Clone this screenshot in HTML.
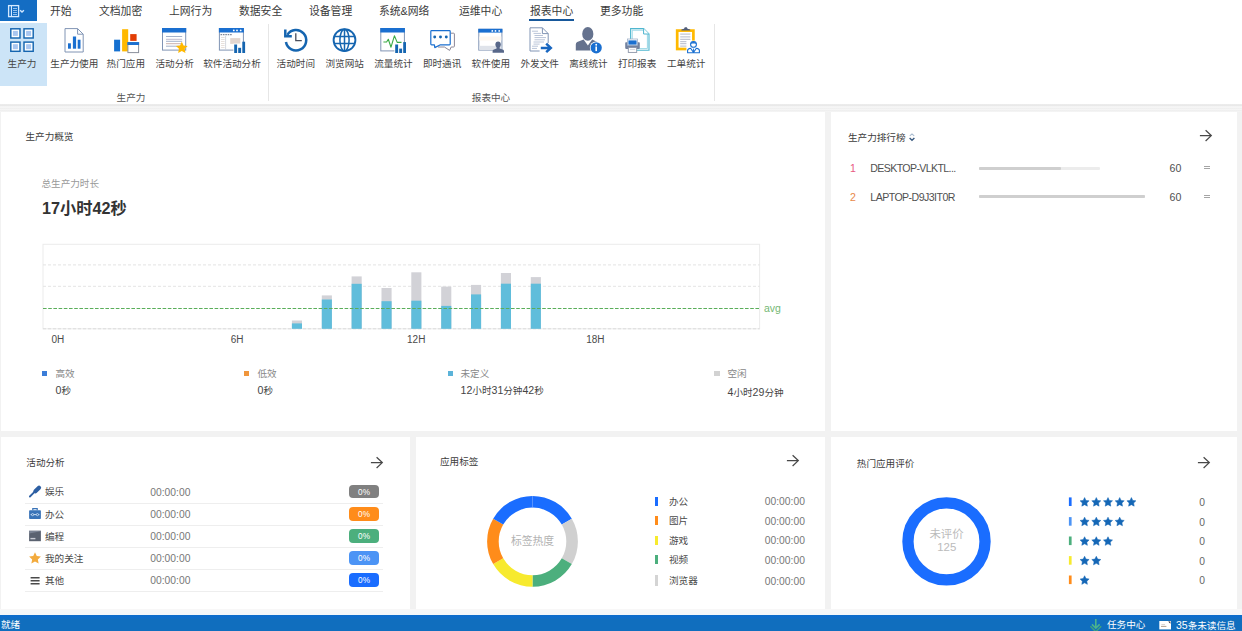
<!DOCTYPE html>
<html lang="zh-CN">
<head>
<meta charset="utf-8">
<title>报表中心 - 生产力</title>
<style>
html,body{margin:0;padding:0;}
body{width:1242px;height:631px;overflow:hidden;background:#f2f2f2;position:relative;
  font-family:"Liberation Sans","Noto Sans CJK SC",sans-serif;font-size:10px;color:#444;}
.abs{position:absolute;}
.t{position:absolute;white-space:nowrap;line-height:14px;height:14px;}
.c{transform:translateX(-50%);}
.panel{position:absolute;background:#fff;}
svg{position:absolute;overflow:visible;}
#menubar{position:absolute;left:0;top:0;width:1242px;height:22px;background:#fff;}
#appbtn{position:absolute;left:0;top:0;width:37px;height:20.7px;background:#146dc3;}
.mi{position:absolute;top:4px;line-height:14px;font-size:10.8px;color:#3a3a3a;white-space:nowrap;}
#ribbon{position:absolute;left:0;top:22px;width:1242px;height:82px;background:#fff;}
.rl{position:absolute;top:57.1px;line-height:14px;font-size:9.6px;color:#444;white-space:nowrap;transform:translateX(-50%);}
.gl{position:absolute;top:91px;line-height:14px;font-size:9.6px;color:#555;white-space:nowrap;transform:translateX(-50%);}
.sep{position:absolute;top:24px;width:1px;height:77px;background:#e6e6e6;}
#status{position:absolute;left:0;top:615.4px;width:1242px;height:16px;background:linear-gradient(to bottom,#0b6ccb 0,#0c6dca 2.5px,#106ebe 4.5px);color:#fff;}
#status .t{font-size:9.6px;top:2.8px;color:#fff;}
</style>
</head>
<body>

<div id="menubar">
  <div id="appbtn">
    <svg width="37" height="21" viewBox="0 0 37 21" style="left:0;top:0">
      <rect x="8.6" y="5.6" width="10" height="11" fill="none" stroke="#d4e9ff" stroke-width="1.3"/>
      <rect x="10.9" y="6" width="1.1" height="10.4" fill="#d4e9ff"/>
      <path d="M13 8.5h4M13 10.5h4M13 12.5h4M13 14.5h4" stroke="#9fc8f2" stroke-width="0.9"/>
      <path d="M20.1 10.2l1.9 1.9 1.9-1.9" fill="none" stroke="#cfe6ff" stroke-width="1.4"/>
    </svg>
  </div>
  <div class="mi" style="left:50px">开始</div>
  <div class="mi" style="left:99px">文档加密</div>
  <div class="mi" style="left:169px">上网行为</div>
  <div class="mi" style="left:239px">数据安全</div>
  <div class="mi" style="left:309px">设备管理</div>
  <div class="mi" style="left:379px">系统&amp;网络</div>
  <div class="mi" style="left:459px">运维中心</div>
  <div class="mi" style="left:530px">报表中心</div>
  <div class="mi" style="left:600px">更多功能</div>
  <div class="abs" style="left:529px;top:18.8px;width:44.6px;height:2.7px;background:#17589b"></div>
</div>
<div id="ribbon"></div>
<div class="abs" style="left:0;top:23px;width:47px;height:63px;background:#cce4f7"></div>
<div class="sep" style="left:268px"></div><div class="sep" style="left:714px"></div>
<div class="rl" style="left:22px">生产力</div>
<div class="rl" style="left:74.3px">生产力使用</div>
<div class="rl" style="left:125.8px">热门应用</div>
<div class="rl" style="left:174.7px">活动分析</div>
<div class="rl" style="left:232px">软件活动分析</div>
<div class="rl" style="left:295.8px">活动时间</div>
<div class="rl" style="left:344.7px">浏览网站</div>
<div class="rl" style="left:393.4px">流量统计</div>
<div class="rl" style="left:442.1px">即时通讯</div>
<div class="rl" style="left:490.8px">软件使用</div>
<div class="rl" style="left:539.7px">外发文件</div>
<div class="rl" style="left:588.4px">离线统计</div>
<div class="rl" style="left:637.1px">打印报表</div>
<div class="rl" style="left:686.2px">工单统计</div>
<div class="gl" style="left:131px">生产力</div><div class="gl" style="left:491px">报表中心</div>
<svg width="1242" height="110" viewBox="0 0 1242 110" style="left:0;top:0">
<rect x="10.8" y="28.8" width="9.2" height="9.2" fill="#fff" stroke="#1565b0" stroke-width="1.45"/>
<rect x="12.9" y="30.9" width="5" height="5" fill="#a9c6f0"/>
<rect x="24.0" y="28.8" width="9.2" height="9.2" fill="#fff" stroke="#1565b0" stroke-width="1.45"/>
<rect x="26.099999999999998" y="30.9" width="5" height="5" fill="#a9c6f0"/>
<rect x="10.8" y="42.099999999999994" width="9.2" height="9.2" fill="#fff" stroke="#1565b0" stroke-width="1.45"/>
<rect x="12.9" y="44.199999999999996" width="5" height="5" fill="#a9c6f0"/>
<rect x="24.0" y="42.099999999999994" width="9.2" height="9.2" fill="#fff" stroke="#1565b0" stroke-width="1.45"/>
<rect x="26.099999999999998" y="44.199999999999996" width="5" height="5" fill="#a9c6f0"/>
<path d="M65 28.6H77.6L83.2 34.2V52H65Z" fill="#fff" stroke="#8094b4" stroke-width="1"/>
<path d="M77.6 28.6V34.2H83.2" fill="none" stroke="#8094b4" stroke-width="1"/>
<rect x="68" y="43.3" width="2.9" height="5.4" fill="#1a6fd0"/><rect x="72.9" y="36.5" width="3.2" height="12.2" fill="#1a6fd0"/><rect x="77.7" y="39.7" width="2.8" height="9" fill="#1a6fd0"/>
<rect x="114.1" y="39.7" width="6" height="11.7" fill="#1570d0"/>
<rect x="122.1" y="29.2" width="6.1" height="22.2" fill="#ffb900"/>
<rect x="130.2" y="34.1" width="6.4" height="6.8" fill="#e23d05"/>
<rect x="127.9" y="42.6" width="10.7" height="10" fill="#fff" stroke="#8a8f9c" stroke-width="1"/>
<rect x="127.4" y="42.1" width="11.7" height="2.9" fill="#1a6fd0"/>
<rect x="162.5" y="28.5" width="23.2" height="21.6" fill="#fff" stroke="#8094b4" stroke-width="1"/><rect x="162" y="28" width="24.2" height="4.5" fill="#1a6fd0"/>
<path d="M166 36.5H182.2" stroke="#9aa9c4" stroke-width="0.9"/>
<path d="M166 39.3H182.2" stroke="#b9b4c9" stroke-width="0.9"/>
<path d="M166 41.3H182.2" stroke="#9aa9c4" stroke-width="0.9"/>
<path d="M166 43.7H182.2" stroke="#c4a9a4" stroke-width="0.9"/>
<path d="M166 46.2H182.2" stroke="#9aa9c4" stroke-width="0.9"/>
<polygon points="181.80,41.70 183.56,45.47 187.70,45.98 184.65,48.83 185.44,52.92 181.80,50.90 178.16,52.92 178.95,48.83 175.90,45.98 180.04,45.47" fill="#ffb900"/>
<rect x="219.4" y="28.5" width="24.0" height="21.6" fill="#fff" stroke="#8094b4" stroke-width="1"/><rect x="218.9" y="28" width="25.0" height="4.5" fill="#1a6fd0"/><circle cx="233.8" cy="30.4" r="0.9" fill="#fff"/><circle cx="237.0" cy="30.4" r="0.9" fill="#fff"/><circle cx="240.7" cy="30.4" r="0.9" fill="#fff"/>
<path d="M220.5 34.6H232.5" stroke="#7f8796" stroke-width="1.1" stroke-dasharray="1.6 0.8"/>
<path d="M225.6 36V50" stroke="#c9ced8" stroke-width="0.8"/>
<path d="M221 37.5H224.6M221 39.5H224.6M221 41.5H224.6M221 43.5H224.6M221 45.5H224.6M221 47.5H224.6" stroke="#e2d9d3" stroke-width="0.8"/>
<rect x="230.2" y="38.1" width="10.1" height="5.8" fill="#e3d6cf"/>
<rect x="233.4" y="43.6" width="12.4" height="9.6" fill="#fff"/>
<rect x="234.2" y="44.5" width="2.9" height="8.5" fill="#1565b0"/><rect x="238.2" y="47.8" width="2.9" height="5.2" fill="#1565b0"/><rect x="242.3" y="41.7" width="2.8" height="11.3" fill="#1565b0"/>
<path d="M287.35 34.79A10.2 10.2 0 1 1 285.95 41.97" fill="none" stroke="#1565b0" stroke-width="2.5"/>
<path d="M285.3 29.6V36.2H291.8" fill="none" stroke="#1565b0" stroke-width="2.5" stroke-linejoin="miter"/>
<path d="M295.8 33.3V40.6H301.8" fill="none" stroke="#4a4f5c" stroke-width="1.3"/>
<circle cx="344.5" cy="40.1" r="10.9" fill="none" stroke="#1565b0" stroke-width="1.9"/>
<ellipse cx="344.5" cy="40.1" rx="4.6" ry="10.9" fill="none" stroke="#1565b0" stroke-width="1.5"/>
<path d="M344.5 29.200000000000003V51.0M334.2 36.6H354.8M334.2 43.6H354.8" fill="none" stroke="#1565b0" stroke-width="1.5"/>
<rect x="380.8" y="28.5" width="23.6" height="22.4" fill="#fff" stroke="#8094b4" stroke-width="1"/><rect x="380.3" y="28" width="24.6" height="4.5" fill="#1a6fd0"/>
<path d="M383.4 42H386.6L388.3 39.3L391 47.2L394.4 35.8L397.2 42.4H401.5" fill="none" stroke="#3aaa45" stroke-width="1.1" stroke-linejoin="round"/>
<rect x="394.4" y="43.7" width="12.4" height="9.6" fill="#fff"/>
<rect x="395.2" y="44.5" width="2.9" height="8.5" fill="#1565b0"/><rect x="399.2" y="48.6" width="2.9" height="4.4" fill="#1565b0"/><rect x="403.2" y="42.1" width="2.8" height="10.9" fill="#1565b0"/>
<path d="M451 33.2H453.6Q454.4 33.2 454.4 34V46.2Q454.4 47 453.6 47H451.2L449.6 50.4L444.4 47H438" fill="none" stroke="#8c8796" stroke-width="1"/>
<path d="M431.6 30.6H449.4Q450.2 30.6 450.2 31.4V44Q450.2 44.8 449.4 44.8H440.4L434.8 47.6L434.4 44.8H431.6Q430.8 44.8 430.8 44V31.4Q430.8 30.6 431.6 30.6Z" fill="#fff" stroke="#1a6fd0" stroke-width="1.2" stroke-linejoin="round"/>
<circle cx="434.7" cy="37" r="1.45" fill="#1565b0"/>
<circle cx="440.5" cy="37" r="1.45" fill="#1565b0"/>
<circle cx="446.3" cy="37" r="1.45" fill="#1565b0"/>
<rect x="478.8" y="29.3" width="23.1" height="20.8" fill="#fff" stroke="#8094b4" stroke-width="1"/><rect x="478.3" y="28.8" width="24.1" height="3.8" fill="#1a6fd0"/><circle cx="492.3" cy="30.9" r="0.9" fill="#fff"/><circle cx="495.5" cy="30.9" r="0.9" fill="#fff"/><circle cx="499.2" cy="30.9" r="0.9" fill="#fff"/>
<rect x="479.3" y="45.8" width="22" height="4.3" fill="#dfe3ea"/>
<rect x="479.3" y="36.5" width="22" height="4" fill="#fdf7f0"/>
<ellipse cx="498.1" cy="44.6" rx="2.7" ry="3.1" fill="#58688a"/>
<path d="M496.6 46.5H499.6V48.6L503.2 49.8Q504 50.2 504 51.2V52.8H492.6V51.2Q492.6 50.2 493.4 49.8L496.6 48.6Z" fill="#58688a"/>
<path d="M530 27.8H542.4L548.2 33.6V51H530Z" fill="#fff" stroke="#8094b4" stroke-width="1"/>
<path d="M542.4 27.8V33.6H548.2" fill="none" stroke="#8094b4" stroke-width="1"/>
<path d="M532 31.2H538" stroke="#b9c4d8" stroke-width="1"/>
<path d="M533.5 33.4H541" stroke="#b9c4d8" stroke-width="1"/>
<path d="M534.5 35.5H543" stroke="#b9c4d8" stroke-width="1"/>
<path d="M534.5 37.6H546" stroke="#b9c4d8" stroke-width="1"/>
<path d="M534.5 39.8H545" stroke="#b9c4d8" stroke-width="1"/>
<path d="M533.5 42.0H544" stroke="#b9c4d8" stroke-width="1"/>
<path d="M533.5 44.1H542" stroke="#b9c4d8" stroke-width="1"/>
<path d="M532 46.2H538" stroke="#b9c4d8" stroke-width="1"/>
<path d="M532 48.4H537" stroke="#b9c4d8" stroke-width="1"/>
<rect x="539.6" y="43" width="10" height="10" fill="#fff"/>
<path d="M540.8 47.9H550M546.2 43.6L550.8 47.9L546.2 52.2" fill="none" stroke="#1866c0" stroke-width="2.5"/>
<ellipse cx="587.8" cy="33.9" rx="5.6" ry="6.9" fill="#65728e"/>
<path d="M583.6 39.6L587.9 45.6L592.2 39.6L597.2 42Q598.6 42.8 598.6 44.6V50.6H575.8V44.6Q575.8 42.8 577.2 42Z" fill="#65728e"/>
<circle cx="596.2" cy="47.8" r="6.4" fill="#fff"/><circle cx="596.2" cy="47.8" r="5.6" fill="#1a6fd0"/>
<circle cx="596.2" cy="44.7" r="0.95" fill="#fff"/><rect x="595.4" y="46.5" width="1.6" height="4.6" fill="#fff"/>
<path d="M630.6 28.6H643.6L649 34V50.2H630.6Z" fill="#fff" stroke="#4fb6cf" stroke-width="1.1"/>
<path d="M632.2 30.2H642.9L647.4 34.7V48.6H632.2Z" fill="#fff" stroke="#8fd3e3" stroke-width="0.9"/>
<path d="M643.6 28.6V34H649" fill="#fff" stroke="#4fb6cf" stroke-width="1"/>
<rect x="625.2" y="42.3" width="14.6" height="6.6" rx="0.8" fill="#73829f"/>
<rect x="627.6" y="39" width="9.8" height="6.2" fill="#fff" stroke="#9fb0c8" stroke-width="0.8"/>
<rect x="628.4" y="40.4" width="8.2" height="4.2" fill="#1a6fd0"/>
<rect x="628.3" y="47.6" width="8.4" height="4.8" fill="#fff" stroke="#8a93a6" stroke-width="0.9"/>
<path d="M629.8 49.6H635.2" stroke="#c9ccd4" stroke-width="0.8"/>
<rect x="677.2" y="30.6" width="16.2" height="18.4" fill="#fff" stroke="#ffb900" stroke-width="2.7"/>
<path d="M680.2 34.1H690.4" stroke="#b4b9c8" stroke-width="1"/>
<path d="M680.2 36.9H690.4" stroke="#b4b9c8" stroke-width="1"/>
<path d="M680.2 39.3H690.4" stroke="#b4b9c8" stroke-width="1"/>
<path d="M680.2 41.7H690.4" stroke="#b4b9c8" stroke-width="1"/>
<path d="M680.2 43.7H690.4" stroke="#b4b9c8" stroke-width="1"/>
<path d="M680.2 46.1H690.4" stroke="#b4b9c8" stroke-width="1"/>
<path d="M681.4 30.4H690.2V29.6L687.6 28.8L686.8 27.2H684.8L684 28.8L681.4 29.6Z" fill="#505c78"/>
<rect x="686.4" y="40.6" width="13.6" height="13" fill="#fff"/>
<circle cx="693.5" cy="44.4" r="2.9" fill="#fff" stroke="#1a6fd0" stroke-width="1.1"/>
<path d="M690.6 43.6Q693.5 40.4 696.4 43.6" fill="#1a6fd0" stroke="#1a6fd0" stroke-width="1"/>
<path d="M687.6 52.8V50.6Q687.6 48.6 690.6 48.2L693.5 52.4L696.4 48.2Q699.4 48.6 699.4 50.6V52.8Z" fill="#fff" stroke="#1a6fd0" stroke-width="1.1" stroke-linejoin="round"/>
<path d="M693.5 48.6V52.6" stroke="#1a6fd0" stroke-width="0.9"/>
</svg>
<div class="abs" style="left:0;top:104px;width:1242px;height:8px;background:linear-gradient(to bottom,#f2f2f2 0,#e8e8e8 0.8px,#e9e9e9 1.6px,#f5f5f5 2.6px,#f5f5f5 3.6px,#efefef 4.4px,#f5f5f5 5.4px,#efefef 6.6px,#f4f4f4 7.6px,#f6f6f6 8px)"></div>
<div class="panel" style="left:1.4px;top:112px;width:823.2px;height:319px"></div>
<div class="panel" style="left:831px;top:112px;width:405.7px;height:319px"></div>
<div class="panel" style="left:1.4px;top:437px;width:408.6px;height:172px"></div>
<div class="panel" style="left:416px;top:437px;width:408.6px;height:172px"></div>
<div class="panel" style="left:831px;top:437px;width:405.7px;height:172px"></div>
<div class="abs" style="left:0;top:609px;width:1242px;height:7px;background:linear-gradient(to bottom,#faf7f6 0,#f3f7f9 1.5px,#f1f6f9 7px)"></div>
<div id="t1" class="t" style="left:25.5px;top:130.1px;font-size:9.6px;color:#3c3c3c;">生产力概览</div>
<div id="t2" class="t" style="left:41.5px;top:177.1px;font-size:9.6px;color:#999;">总生产力时长</div>
<div class="t" style="left:42px;top:197.6px;font-size:16.2px;line-height:20px;height:20px;font-weight:bold;color:#333">17小时42秒</div>
<svg width="1242" height="631" viewBox="0 0 1242 631" style="left:0;top:0">
<rect x="43.0" y="244.3" width="716.6" height="84.5" fill="none" stroke="#ececec" stroke-width="1"/>
<path d="M43.0 264.9H759.6" stroke="#e4e4e4" stroke-width="1" stroke-dasharray="3 2"/>
<path d="M43.0 286.3H759.6" stroke="#e4e4e4" stroke-width="1" stroke-dasharray="3 2"/>
<path d="M43.0 328.8H759.6" stroke="#dcdcdc" stroke-width="1" stroke-dasharray="3 2"/>
<rect x="291.9" y="320.5" width="10.1" height="8.3" fill="#d2d2d7"/>
<rect x="291.9" y="323.4" width="10.1" height="5.4" fill="#60bddb"/>
<rect x="321.8" y="295.4" width="10.1" height="33.4" fill="#d2d2d7"/>
<rect x="321.8" y="299.5" width="10.1" height="29.3" fill="#60bddb"/>
<rect x="351.6" y="276.4" width="10.1" height="52.4" fill="#d2d2d7"/>
<rect x="351.6" y="283.8" width="10.1" height="45.0" fill="#60bddb"/>
<rect x="381.5" y="288" width="10.1" height="40.8" fill="#d2d2d7"/>
<rect x="381.5" y="301.2" width="10.1" height="27.6" fill="#60bddb"/>
<rect x="411.3" y="272.3" width="10.1" height="56.5" fill="#d2d2d7"/>
<rect x="411.3" y="300.7" width="10.1" height="28.1" fill="#60bddb"/>
<rect x="441.2" y="286.6" width="10.1" height="42.2" fill="#d2d2d7"/>
<rect x="441.2" y="305.9" width="10.1" height="22.9" fill="#60bddb"/>
<rect x="471.0" y="284.9" width="10.1" height="43.9" fill="#d2d2d7"/>
<rect x="471.0" y="294.4" width="10.1" height="34.4" fill="#60bddb"/>
<rect x="500.9" y="273" width="10.1" height="55.8" fill="#d2d2d7"/>
<rect x="500.9" y="283.7" width="10.1" height="45.1" fill="#60bddb"/>
<rect x="530.8" y="277.1" width="10.1" height="51.7" fill="#d2d2d7"/>
<rect x="530.8" y="283.7" width="10.1" height="45.1" fill="#60bddb"/>
<path d="M43.0 308.5H759.6" stroke="#5aae5a" stroke-width="1.05" stroke-dasharray="3.6 1.6"/>
<text x="764" y="311.6" font-size="10.5" fill="#74b874">avg</text>
</svg>
<div id="t3" class="t c" style="left:57.9px;top:332.9px;font-size:10px;color:#4a4a4a;">0H</div>
<div id="t4" class="t c" style="left:237.1px;top:332.9px;font-size:10px;color:#4a4a4a;">6H</div>
<div id="t5" class="t c" style="left:416.2px;top:332.9px;font-size:10px;color:#4a4a4a;">12H</div>
<div id="t6" class="t c" style="left:595.4px;top:332.9px;font-size:10px;color:#4a4a4a;">18H</div>
<div class="abs" style="left:41.7px;top:370.6px;width:5.6px;height:5.4px;background:#3b7dd8"></div>
<div id="t7" class="t" style="left:55.5px;top:367.1px;font-size:9.6px;color:#888;">高效</div>
<div id="t8" class="t" style="left:55.5px;top:383.2px;font-size:9.6px;color:#444;"><span style="font-size:10.6px">0</span>秒</div>
<div class="abs" style="left:243.7px;top:370.6px;width:5.6px;height:5.4px;background:#f0963c"></div>
<div id="t9" class="t" style="left:257.5px;top:367.1px;font-size:9.6px;color:#888;">低效</div>
<div id="t10" class="t" style="left:257.5px;top:383.2px;font-size:9.6px;color:#444;"><span style="font-size:10.6px">0</span>秒</div>
<div class="abs" style="left:447.5px;top:370.6px;width:5.6px;height:5.4px;background:#5bb3d9"></div>
<div id="t11" class="t" style="left:460.5px;top:367.1px;font-size:9.6px;color:#888;">未定义</div>
<div id="t12" class="t" style="left:460.5px;top:383.2px;font-size:9.6px;color:#444;"><span style="font-size:10.6px">12</span>小时<span style="font-size:10.6px">31</span>分钟<span style="font-size:10.6px">42</span>秒</div>
<div class="abs" style="left:714.3px;top:370.6px;width:5.6px;height:5.4px;background:#d2d2d2"></div>
<div id="t13" class="t" style="left:727.5px;top:367.1px;font-size:9.6px;color:#888;">空闲</div>
<div id="t14" class="t" style="left:727.5px;top:384.7px;font-size:9.6px;color:#444;"><span style="font-size:10.6px">4</span>小时<span style="font-size:10.6px">29</span>分钟</div>
<div id="t15" class="t" style="left:848px;top:130.6px;font-size:9.6px;color:#3c3c3c;">生产力排行榜</div>
<svg width="6" height="8" viewBox="0 0 6 8" style="left:909px;top:133.4px"><path d="M0.8 2.9L3 0.9L5.2 2.9" fill="none" stroke="#a9bbcf" stroke-width="1.1"/><path d="M0.6 4.9L3 7.2L5.4 4.9" fill="none" stroke="#38597f" stroke-width="1.4"/></svg>
<svg width="14" height="12" viewBox="0 0 14 12" style="left:1199.3px;top:129.8px"><path d="M0.9 5.6H12.3M6.6 0.2L12.3 5.6L6.6 11" fill="none" stroke="#484848" stroke-width="1.25"/></svg>
<div id="t16" class="t" style="left:850px;top:160.5px;font-size:10.6px;color:#e85a82;">1</div>
<div id="t17" class="t" style="left:870.3px;top:160.5px;font-size:10.6px;color:#505050;letter-spacing:-0.62px;">DESKTOP-VLKTL...</div>
<div class="abs" style="left:979px;top:166.5px;width:121px;height:3.5px;background:#ececec;border-radius:1px"></div>
<div class="abs" style="left:979px;top:166.5px;width:82px;height:3.5px;background:#cfcfcf;border-radius:1px"></div>
<div id="t18" class="t" style="left:1169.5px;top:160.5px;font-size:10.6px;color:#505050;">60</div>
<div class="abs" style="left:1204px;top:166.1px;width:5.6px;height:1px;background:#a5a5a5"></div>
<div class="abs" style="left:1204px;top:168.1px;width:5.6px;height:1px;background:#a5a5a5"></div>
<div id="t19" class="t" style="left:850px;top:189.9px;font-size:10.6px;color:#e8894a;">2</div>
<div id="t20" class="t" style="left:870.3px;top:189.9px;font-size:10.6px;color:#505050;letter-spacing:-0.55px;">LAPTOP-D9J3IT0R</div>
<div class="abs" style="left:979px;top:194.9px;width:166px;height:3.5px;background:#ececec;border-radius:1px"></div>
<div class="abs" style="left:979px;top:194.9px;width:166px;height:3.5px;background:#cfcfcf;border-radius:1px"></div>
<div id="t21" class="t" style="left:1169.5px;top:189.9px;font-size:10.6px;color:#505050;">60</div>
<div class="abs" style="left:1204px;top:194.5px;width:5.6px;height:1px;background:#a5a5a5"></div>
<div class="abs" style="left:1204px;top:196.5px;width:5.6px;height:1px;background:#a5a5a5"></div>
<div id="t22" class="t" style="left:26.3px;top:455.5px;font-size:9.6px;color:#3c3c3c;">活动分析</div>
<svg width="14" height="12" viewBox="0 0 14 12" style="left:370.4px;top:456.9px"><path d="M0.9 5.6H12.3M6.6 0.2L12.3 5.6L6.6 11" fill="none" stroke="#484848" stroke-width="1.25"/></svg>
<div id="t23" class="t" style="left:45px;top:485.4px;font-size:9.6px;color:#4a4a4a;">娱乐</div>
<div id="t24" class="t" style="left:150.3px;top:486.4px;font-size:10.3px;color:#777;">00:00:00</div>
<div class="abs" style="left:349.2px;top:484.8px;width:29.7px;height:13.7px;border-radius:4px;background:#808080;color:#fff;font-size:8.2px;line-height:15.2px;text-align:center">0%</div>
<div class="abs" style="left:24.6px;top:503.0px;width:358.8px;height:1px;background:#eeeeee"></div>
<div id="t25" class="t" style="left:45px;top:507.8px;font-size:9.6px;color:#4a4a4a;">办公</div>
<div id="t26" class="t" style="left:150.3px;top:508.4px;font-size:10.3px;color:#777;">00:00:00</div>
<div class="abs" style="left:349.2px;top:506.9px;width:29.7px;height:13.7px;border-radius:4px;background:#ff8c1a;color:#fff;font-size:8.2px;line-height:15.2px;text-align:center">0%</div>
<div class="abs" style="left:24.6px;top:525.0px;width:358.8px;height:1px;background:#eeeeee"></div>
<div id="t27" class="t" style="left:45px;top:530.2px;font-size:9.6px;color:#4a4a4a;">编程</div>
<div id="t28" class="t" style="left:150.3px;top:530.4px;font-size:10.3px;color:#777;">00:00:00</div>
<div class="abs" style="left:349.2px;top:529.0px;width:29.7px;height:13.7px;border-radius:4px;background:#4caf7d;color:#fff;font-size:8.2px;line-height:15.2px;text-align:center">0%</div>
<div class="abs" style="left:24.6px;top:547.0px;width:358.8px;height:1px;background:#eeeeee"></div>
<div id="t29" class="t" style="left:45px;top:552.2px;font-size:9.6px;color:#4a4a4a;">我的关注</div>
<div id="t30" class="t" style="left:150.3px;top:552.4px;font-size:10.3px;color:#777;">00:00:00</div>
<div class="abs" style="left:349.2px;top:551.1px;width:29.7px;height:13.7px;border-radius:4px;background:#4c94f5;color:#fff;font-size:8.2px;line-height:15.2px;text-align:center">0%</div>
<div class="abs" style="left:24.6px;top:569.0px;width:358.8px;height:1px;background:#eeeeee"></div>
<div id="t31" class="t" style="left:45px;top:574.1px;font-size:9.6px;color:#4a4a4a;">其他</div>
<div id="t32" class="t" style="left:150.3px;top:574.4px;font-size:10.3px;color:#777;">00:00:00</div>
<div class="abs" style="left:349.2px;top:573.2px;width:29.7px;height:13.7px;border-radius:4px;background:#1a6dff;color:#fff;font-size:8.2px;line-height:15.2px;text-align:center">0%</div>
<div class="abs" style="left:24.6px;top:591.0px;width:358.8px;height:1px;background:#eeeeee"></div>
<svg width="1242" height="631" viewBox="0 0 1242 631" style="left:0;top:0">
<path d="M29.9 496.5L36 490.4" stroke="#2d5fa3" stroke-width="1.8" stroke-linecap="round"/>
<path d="M35.4 491.2L39 487.7" stroke="#2d5fa3" stroke-width="4.2" stroke-linecap="round"/>
<rect x="29.1" y="510.3" width="11.8" height="8.7" rx="0.8" fill="#3a74b8"/>
<path d="M32.8 510.3V508.6H37.2V510.3" fill="none" stroke="#3a74b8" stroke-width="1.2"/>
<path d="M30.6 514.6H39.4" stroke="#d8e6f5" stroke-width="0.9"/>
<circle cx="32.6" cy="514.6" r="1.1" fill="#3a74b8" stroke="#d8e6f5" stroke-width="0.7"/><circle cx="37.4" cy="514.6" r="1.1" fill="#3a74b8" stroke="#d8e6f5" stroke-width="0.7"/>
<rect x="29.1" y="530.8" width="11.8" height="10.4" fill="#5a6270"/>
<path d="M29.1 533.4L40.9 531.2V530.8H29.1Z" fill="#7b8494"/>
<path d="M30.4 538.6H35.4" stroke="#c8ccd4" stroke-width="1.4"/>
<polygon points="35.00,552.30 36.76,556.07 40.90,556.58 37.85,559.43 38.64,563.52 35.00,561.50 31.36,563.52 32.15,559.43 29.10,556.58 33.24,556.07" fill="#f3ab3e"/>
<path d="M30.6 577.7H39.6M30.6 580.75H39.6M30.6 583.8H39.6" stroke="#4a4a4a" stroke-width="1.4"/>
</svg>
<div id="t33" class="t" style="left:440px;top:455.4px;font-size:9.6px;color:#3c3c3c;">应用标签</div>
<svg width="14" height="12" viewBox="0 0 14 12" style="left:786.1px;top:455.4px"><path d="M0.9 5.6H12.3M6.6 0.2L12.3 5.6L6.6 11" fill="none" stroke="#484848" stroke-width="1.25"/></svg>
<svg width="1242" height="631" viewBox="0 0 1242 631" style="left:0;top:0">
<path d="M532.50 496.00A45.4 45.4 0 0 1 571.82 518.70L561.77 524.50A33.8 33.8 0 0 0 532.50 507.60Z" fill="#1a6dff"/>
<path d="M571.82 518.70A45.4 45.4 0 0 1 571.82 564.10L561.77 558.30A33.8 33.8 0 0 0 561.77 524.50Z" fill="#d0d0d0"/>
<path d="M571.82 564.10A45.4 45.4 0 0 1 532.50 586.80L532.50 575.20A33.8 33.8 0 0 0 561.77 558.30Z" fill="#4caf7d"/>
<path d="M532.50 586.80A45.4 45.4 0 0 1 493.18 564.10L503.23 558.30A33.8 33.8 0 0 0 532.50 575.20Z" fill="#f7ea2e"/>
<path d="M493.18 564.10A45.4 45.4 0 0 1 493.18 518.70L503.23 524.50A33.8 33.8 0 0 0 503.23 558.30Z" fill="#ff8c1a"/>
<path d="M493.18 518.70A45.4 45.4 0 0 1 532.50 496.00L532.50 507.60A33.8 33.8 0 0 0 503.23 524.50Z" fill="#1a6dff"/>
<path d="M532.50 496.00L532.50 507.60" stroke="#5a95ff" stroke-width="0.5"/>
</svg>
<div id="t34" class="t c" style="left:532.5px;top:534.3px;font-size:10.8px;color:#b2b2b2;">标签热度</div>
<div class="abs" style="left:655.4px;top:497.0px;width:2.3px;height:8.8px;background:#1a6dff"></div>
<div id="t35" class="t" style="left:669px;top:494.9px;font-size:9.6px;color:#4a4a4a;">办公</div>
<div id="t36" class="t" style="left:764.8px;top:494.6px;font-size:10.3px;color:#777;">00:00:00</div>
<div class="abs" style="left:655.4px;top:516.4px;width:2.3px;height:8.8px;background:#ff8c1a"></div>
<div id="t37" class="t" style="left:669px;top:514.3px;font-size:9.6px;color:#4a4a4a;">图片</div>
<div id="t38" class="t" style="left:764.8px;top:515.0px;font-size:10.3px;color:#777;">00:00:00</div>
<div class="abs" style="left:655.4px;top:536.0px;width:2.3px;height:8.8px;background:#f7ea2e"></div>
<div id="t39" class="t" style="left:669px;top:533.9px;font-size:9.6px;color:#4a4a4a;">游戏</div>
<div id="t40" class="t" style="left:764.8px;top:533.6px;font-size:10.3px;color:#777;">00:00:00</div>
<div class="abs" style="left:655.4px;top:555.4px;width:2.3px;height:8.8px;background:#4caf7d"></div>
<div id="t41" class="t" style="left:669px;top:553.3px;font-size:9.6px;color:#4a4a4a;">视频</div>
<div id="t42" class="t" style="left:764.8px;top:554.0px;font-size:10.3px;color:#777;">00:00:00</div>
<div class="abs" style="left:655.4px;top:575.4px;width:2.3px;height:10.4px;background:#d4d4d4"></div>
<div id="t43" class="t" style="left:669px;top:574.1px;font-size:9.6px;color:#4a4a4a;">浏览器</div>
<div id="t44" class="t" style="left:764.8px;top:574.8px;font-size:10.3px;color:#777;">00:00:00</div>
<div id="t45" class="t" style="left:856.8px;top:456.6px;font-size:9.6px;color:#3c3c3c;">热门应用评价</div>
<svg width="14" height="12" viewBox="0 0 14 12" style="left:1197.3px;top:456.7px"><path d="M0.9 5.6H12.3M6.6 0.2L12.3 5.6L6.6 11" fill="none" stroke="#484848" stroke-width="1.25"/></svg>
<svg width="1242" height="631" viewBox="0 0 1242 631" style="left:0;top:0">
<circle cx="946.5" cy="541.4" r="38.55" fill="none" stroke="#1a6dff" stroke-width="11.3"/>
<rect x="1068.9" y="497.4" width="2.7" height="8.6" fill="#1a6dff"/>
<polygon points="1084.60,497.55 1085.98,500.40 1089.12,500.83 1086.83,503.03 1087.39,506.14 1084.60,504.65 1081.81,506.14 1082.37,503.03 1080.08,500.83 1083.22,500.40" fill="#1567b6" stroke="#1567b6" stroke-width="0.5" stroke-linejoin="round"/>
<polygon points="1096.30,497.55 1097.68,500.40 1100.82,500.83 1098.53,503.03 1099.09,506.14 1096.30,504.65 1093.51,506.14 1094.07,503.03 1091.78,500.83 1094.92,500.40" fill="#1567b6" stroke="#1567b6" stroke-width="0.5" stroke-linejoin="round"/>
<polygon points="1108.00,497.55 1109.38,500.40 1112.52,500.83 1110.23,503.03 1110.79,506.14 1108.00,504.65 1105.21,506.14 1105.77,503.03 1103.48,500.83 1106.62,500.40" fill="#1567b6" stroke="#1567b6" stroke-width="0.5" stroke-linejoin="round"/>
<polygon points="1119.70,497.55 1121.08,500.40 1124.22,500.83 1121.93,503.03 1122.49,506.14 1119.70,504.65 1116.91,506.14 1117.47,503.03 1115.18,500.83 1118.32,500.40" fill="#1567b6" stroke="#1567b6" stroke-width="0.5" stroke-linejoin="round"/>
<polygon points="1131.40,497.55 1132.78,500.40 1135.92,500.83 1133.63,503.03 1134.19,506.14 1131.40,504.65 1128.61,506.14 1129.17,503.03 1126.88,500.83 1130.02,500.40" fill="#1567b6" stroke="#1567b6" stroke-width="0.5" stroke-linejoin="round"/>
<rect x="1068.9" y="517.1" width="2.7" height="8.6" fill="#4c94f5"/>
<polygon points="1084.60,517.15 1085.98,520.00 1089.12,520.43 1086.83,522.63 1087.39,525.74 1084.60,524.25 1081.81,525.74 1082.37,522.63 1080.08,520.43 1083.22,520.00" fill="#1567b6" stroke="#1567b6" stroke-width="0.5" stroke-linejoin="round"/>
<polygon points="1096.30,517.15 1097.68,520.00 1100.82,520.43 1098.53,522.63 1099.09,525.74 1096.30,524.25 1093.51,525.74 1094.07,522.63 1091.78,520.43 1094.92,520.00" fill="#1567b6" stroke="#1567b6" stroke-width="0.5" stroke-linejoin="round"/>
<polygon points="1108.00,517.15 1109.38,520.00 1112.52,520.43 1110.23,522.63 1110.79,525.74 1108.00,524.25 1105.21,525.74 1105.77,522.63 1103.48,520.43 1106.62,520.00" fill="#1567b6" stroke="#1567b6" stroke-width="0.5" stroke-linejoin="round"/>
<polygon points="1119.70,517.15 1121.08,520.00 1124.22,520.43 1121.93,522.63 1122.49,525.74 1119.70,524.25 1116.91,525.74 1117.47,522.63 1115.18,520.43 1118.32,520.00" fill="#1567b6" stroke="#1567b6" stroke-width="0.5" stroke-linejoin="round"/>
<rect x="1068.9" y="536.5" width="2.7" height="8.6" fill="#4caf7d"/>
<polygon points="1084.60,536.75 1085.98,539.60 1089.12,540.03 1086.83,542.23 1087.39,545.34 1084.60,543.85 1081.81,545.34 1082.37,542.23 1080.08,540.03 1083.22,539.60" fill="#1567b6" stroke="#1567b6" stroke-width="0.5" stroke-linejoin="round"/>
<polygon points="1096.30,536.75 1097.68,539.60 1100.82,540.03 1098.53,542.23 1099.09,545.34 1096.30,543.85 1093.51,545.34 1094.07,542.23 1091.78,540.03 1094.92,539.60" fill="#1567b6" stroke="#1567b6" stroke-width="0.5" stroke-linejoin="round"/>
<polygon points="1108.00,536.75 1109.38,539.60 1112.52,540.03 1110.23,542.23 1110.79,545.34 1108.00,543.85 1105.21,545.34 1105.77,542.23 1103.48,540.03 1106.62,539.60" fill="#1567b6" stroke="#1567b6" stroke-width="0.5" stroke-linejoin="round"/>
<rect x="1068.9" y="556.1" width="2.7" height="8.6" fill="#f7ea2e"/>
<polygon points="1084.60,556.25 1085.98,559.10 1089.12,559.53 1086.83,561.73 1087.39,564.84 1084.60,563.35 1081.81,564.84 1082.37,561.73 1080.08,559.53 1083.22,559.10" fill="#1567b6" stroke="#1567b6" stroke-width="0.5" stroke-linejoin="round"/>
<polygon points="1096.30,556.25 1097.68,559.10 1100.82,559.53 1098.53,561.73 1099.09,564.84 1096.30,563.35 1093.51,564.84 1094.07,561.73 1091.78,559.53 1094.92,559.10" fill="#1567b6" stroke="#1567b6" stroke-width="0.5" stroke-linejoin="round"/>
<rect x="1068.9" y="575.5" width="2.7" height="8.6" fill="#ff8c1a"/>
<polygon points="1084.60,575.75 1085.98,578.60 1089.12,579.03 1086.83,581.23 1087.39,584.34 1084.60,582.85 1081.81,584.34 1082.37,581.23 1080.08,579.03 1083.22,578.60" fill="#1567b6" stroke="#1567b6" stroke-width="0.5" stroke-linejoin="round"/>
</svg>
<div id="t46" class="t" style="left:1199.3px;top:496.4px;font-size:10.3px;color:#666;">0</div>
<div id="t47" class="t" style="left:1199.3px;top:516.1px;font-size:10.3px;color:#666;">0</div>
<div id="t48" class="t" style="left:1199.3px;top:534.7px;font-size:10.3px;color:#666;">0</div>
<div id="t49" class="t" style="left:1199.3px;top:555.0px;font-size:10.3px;color:#666;">0</div>
<div id="t50" class="t" style="left:1199.3px;top:573.7px;font-size:10.3px;color:#666;">0</div>
<div id="t51" class="t c" style="left:946.5px;top:527.0px;font-size:11.4px;color:#bbb;">未评价</div>
<div id="t52" class="t c" style="left:946.8px;top:539.6px;font-size:11.4px;color:#bbb;">125</div>
<div id="status">
  <div class="t" style="left:1px">就绪</div>
  <div class="t" style="left:1107px">任务中心</div>
  <div class="t" style="left:1176px"><span style="font-size:10.5px">35</span>条未读信息</div>
  <svg width="1242" height="16" viewBox="0 615 1242 16" style="left:0;top:0.4px">
    <path d="M1095.8 618V627M1092 623.4L1095.8 627.2L1099.6 623.4" fill="none" stroke="#4cb48c" stroke-width="1.6"/>
    <path d="M1090.4 625.2L1095.8 630.8L1101.2 625.2" fill="none" stroke="#3fa47c" stroke-width="1.4"/>
    <rect x="1159.3" y="620" width="11.7" height="8.4" fill="#fff"/>
    <path d="M1161 625.4H1166.4" stroke="#b0a090" stroke-width="1"/><path d="M1161.4 623.6H1165" stroke="#c8c0b8" stroke-width="0.7"/>
    <path d="M1168.2 620.6H1170.4V622.8Z" fill="#223"/>
  </svg>
</div>
</body>
</html>
